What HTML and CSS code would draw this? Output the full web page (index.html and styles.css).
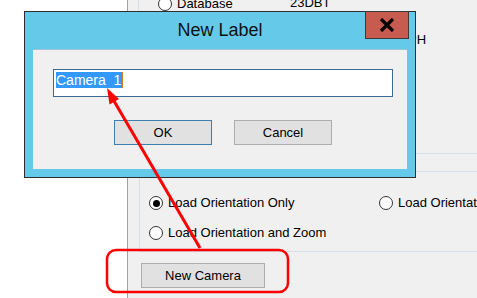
FILE: index.html
```html
<!DOCTYPE html>
<html>
<head>
<meta charset="utf-8">
<title>New Label</title>
<link rel="stylesheet" href="styles.css">
</head>
<body>
<div class="screen">
  <div class="left-pane"></div>
  <div class="main-pane">
    <div class="group group-top">
      <div class="db-row">
        <label class="opt opt-db"><span class="radio"></span><span class="opt-text">Database</span></label>
        <span class="db-code">23DBT</span>
      </div>
      <div class="ph-row"><span>PH</span></div>
    </div>
    <div class="group group-view">
      <div class="view-grid">
        <label class="opt"><span class="radio checked"></span><span class="opt-text">Load Orientation Only</span></label>
        <label class="opt"><span class="radio"></span><span class="opt-text">Load Orientation and Position</span></label>
        <label class="opt"><span class="radio"></span><span class="opt-text">Load Orientation and Zoom</span></label>
      </div>
    </div>
    <div class="actions">
      <button class="btn btn-new">New Camera</button>
    </div>
  </div>
</div>

<div class="dialog">
  <div class="dialog-title">New Label</div>
  <button class="dialog-close" aria-label="Close">
    <svg width="16" height="14" viewBox="0 0 16 14"><path d="M2 1 L14 13 M14 1 L2 13" stroke="#000" stroke-width="3.2" fill="none"/></svg>
  </button>
  <div class="dialog-body">
    <div class="textbox"><span class="sel">Camera&nbsp;&nbsp;1</span><span class="caret"></span></div>
    <div class="dialog-buttons">
      <button class="btn btn-ok">OK</button>
      <button class="btn">Cancel</button>
    </div>
  </div>
</div>

<svg class="annot" width="477" height="298" viewBox="0 0 477 298">
  <line x1="200" y1="248" x2="114" y2="101" stroke="#ff0000" stroke-width="3"/>
  <polygon points="107,88 119,99 109.5,104.5" fill="#ff0000"/>
  <rect x="107" y="250" width="181" height="42" rx="9" ry="9" fill="none" stroke="#ff0000" stroke-width="2.5"/>
</svg>
</body>
</html>
```
FILE: styles.css
```css
html, body {
  margin: 0;
  padding: 0;
}
body {
  width: 477px;
  height: 298px;
  overflow: hidden;
  position: relative;
  background: #ffffff;
  font-family: "Liberation Sans", Arial, sans-serif;
  font-size: 13px;
  color: #000;
}
.screen {
  display: flex;
  height: 298px;
}
.left-pane {
  width: 127px;
  background: #ffffff;
  border-right: 1px solid #a0a0a0;
}
.main-pane {
  flex: 1;
  min-width: 0;
  background: #f0f0f0;
  display: flex;
  flex-direction: column;
  overflow: hidden;
}
.group {
  box-sizing: border-box;
  border-left: 1px solid #d5dfe5;
  border-bottom: 1px solid #d5dfe5;
}
.group-top {
  margin-left: 10px;
  height: 154px;
  width: 400px;
}
.db-row {
  display: flex;
  align-items: center;
  height: 14px;
  margin-top: -3px;
  padding-left: 19px;
}
.opt {
  display: flex;
  align-items: center;
  gap: 5px;
  white-space: nowrap;
  line-height: 14px;
}
.opt-db {
  width: 132px;
}
.db-code {
  margin-top: -3px;
}
.ph-row {
  margin-top: 22px;
  padding-left: 269px;
  line-height: 14px;
}
.radio {
  box-sizing: border-box;
  width: 14px;
  height: 14px;
  border-radius: 50%;
  border: 1px solid #333333;
  background: #ffffff;
  display: flex;
  align-items: center;
  justify-content: center;
  flex: none;
}
.radio.checked::after {
  content: "";
  width: 7px;
  height: 7px;
  border-radius: 50%;
  background: #000;
}
.group-view {
  margin-left: 11px;
  margin-top: 17px;
  height: 81px;
  width: 400px;
  border-top: 1px solid #d5dfe5;
}
.view-grid {
  display: grid;
  grid-template-columns: 230px auto;
  row-gap: 16px;
  padding-top: 24px;
  padding-left: 9px;
}
.actions {
  padding-top: 11px;
  padding-left: 13px;
}
.btn {
  box-sizing: border-box;
  font-family: "Liberation Sans", Arial, sans-serif;
  font-size: 13px;
  color: #000;
  background: #e1e1e1;
  border: 1px solid #adadad;
  height: 25px;
  padding: 0;
  margin: 0;
}
.btn-new {
  width: 124px;
}
.dialog {
  position: absolute;
  left: 24px;
  top: 11px;
  width: 392px;
  height: 167px;
  box-sizing: border-box;
  background: #65c9ea;
  border: 1px solid #2e2e2e;
  display: flex;
  flex-direction: column;
}
.dialog-title {
  height: 37px;
  line-height: 37px;
  text-align: center;
  font-size: 18px;
  color: #111;
}
.dialog-close {
  position: absolute;
  top: -1px;
  right: 6px;
  width: 44px;
  height: 28px;
  box-sizing: border-box;
  background: #c75b50;
  border: 1px solid #3a3a3a;
  padding: 0;
  display: flex;
  align-items: center;
  justify-content: center;
}
.dialog-body {
  flex: 1;
  margin: 0 8px 8px 8px;
  background: #f0f0f0;
  border-top: 1px solid #9fc4d4;
  padding: 19px 0 0 20px;
}
.textbox {
  box-sizing: border-box;
  width: 340px;
  height: 28px;
  background: #fff;
  border: 1px solid #3d6a90;
  padding: 2px 0 0 2px;
  display: flex;
  align-items: flex-start;
}
.sel {
  background: #3399ff;
  color: #fff;
  font-size: 14px;
  line-height: 16px;
  white-space: pre;
  padding-right: 1px;
}
.caret {
  width: 1px;
  height: 16px;
  background: #d97a1e;
}
.dialog-buttons {
  display: flex;
  gap: 22px;
  margin-top: 23px;
  margin-left: 61px;
}
.dialog-buttons .btn {
  width: 98px;
}
.btn-ok {
  border-color: #3c7fb1;
}
.annot {
  position: absolute;
  left: 0;
  top: 0;
  pointer-events: none;
}
```
